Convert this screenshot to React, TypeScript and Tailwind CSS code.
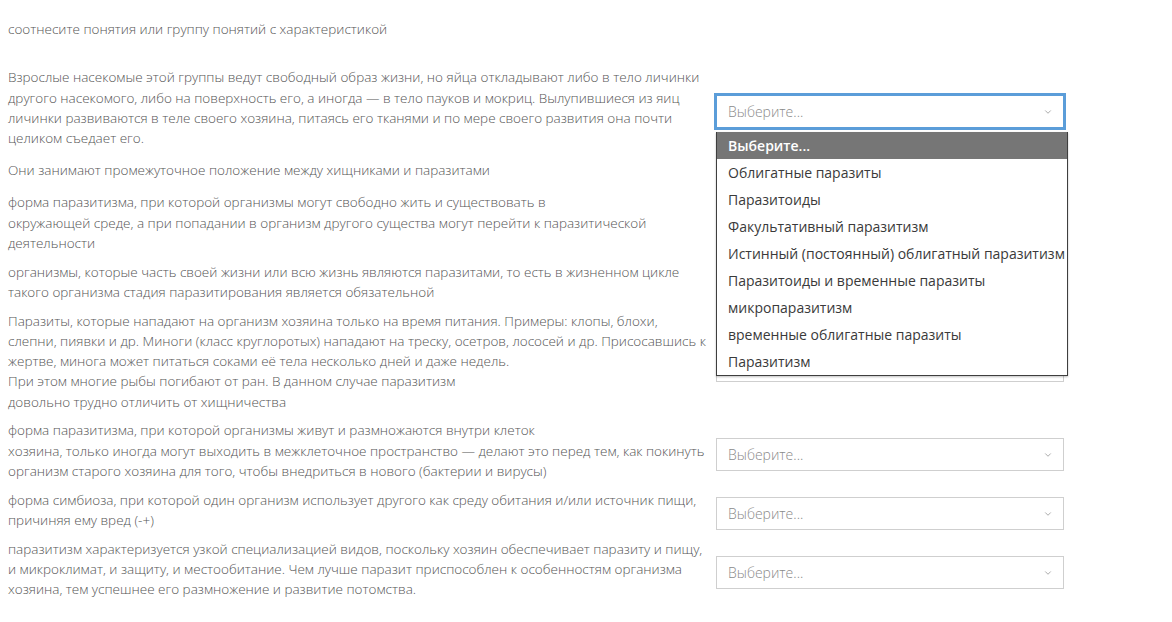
import { ChevronDown } from "lucide-react";

const rows: string[][] = [
  [
    "Взрослые насекомые этой группы ведут свободный образ жизни, но яйца откладывают либо в тело личинки",
    "другого насекомого, либо на поверхность его, а иногда — в тело пауков и мокриц. Вылупившиеся из яиц",
    "личинки развиваются в теле своего хозяина, питаясь его тканями и по мере своего развития она почти",
    "целиком съедает его.",
  ],
  ["Они занимают промежуточное положение между хищниками и паразитами"],
  [
    "форма паразитизма, при которой организмы могут свободно жить и существовать в",
    "окружающей среде, а при попадании в организм другого существа могут перейти к паразитической",
    "деятельности",
  ],
  [
    "организмы, которые часть своей жизни или всю жизнь являются паразитами, то есть в жизненном цикле",
    "такого организма стадия паразитирования является обязательной",
  ],
  [
    "Паразиты, которые нападают на организм хозяина только на время питания. Примеры: клопы, блохи,",
    "слепни, пиявки и др. Миноги (класс круглоротых) нападают на треску, осетров, лососей и др. Присосавшись к",
    "жертве, минога может питаться соками её тела несколько дней и даже недель.",
    "При этом многие рыбы погибают от ран. В данном случае паразитизм",
    "довольно трудно отличить от хищничества",
  ],
  [
    "форма паразитизма, при которой организмы живут и размножаются внутри клеток",
    "хозяина, только иногда могут выходить в межклеточное пространство — делают это перед тем, как покинуть",
    "организм старого хозяина для того, чтобы внедриться в нового (бактерии и вирусы)",
  ],
  [
    "форма симбиоза, при которой один организм использует другого как среду обитания и/или источник пищи,",
    "причиняя ему вред (-+)",
  ],
  [
    "паразитизм характеризуется узкой специализацией видов, поскольку хозяин обеспечивает паразиту и пищу,",
    "и микроклимат, и защиту, и местообитание. Чем лучше паразит приспособлен к особенностям организма",
    "хозяина, тем успешнее его размножение и развитие потомства.",
  ],
];

const options = [
  "Выберите...",
  "Облигатные паразиты",
  "Паразитоиды",
  "Факультативный паразитизм",
  "Истинный (постоянный) облигатный паразитизм",
  "Паразитоиды и временные паразиты",
  "микропаразитизм",
  "временные облигатные паразиты",
  "Паразитизм",
];

function FakeSelect({ open }: { open?: boolean }) {
  return (
    <div className="relative mt-[1px] mb-[-7px] shrink-0">
      <div
        className={
          open
            ? "w-[348px] h-[33px] flex items-center justify-between pl-[11px] pr-[10px] bg-white border border-[#5b9dd9] ring-2 ring-[#5b9dd9]"
            : "w-[348px] h-[33px] flex items-center justify-between pl-[11px] pr-[10px] bg-white border border-[#cfcfcf]"
        }
      >
        <span className="text-[14px] font-light text-[#8a8a8a]">Выберите...</span>
        <ChevronDown size={10} strokeWidth={2} className="text-[#9a9a9a]" />
      </div>

      {/* native option list, drawn open */}
      {open && (
        <div className="absolute z-10 left-0 top-[37px] w-[352px] bg-white border border-t-0 border-[#3e3e3e] shadow-[0_1px_2px_rgba(0,0,0,0.25)]">
          {options.map((o, i) => (
            <div
              key={o}
              className={
                i === 0
                  ? "h-[27px] flex items-center pl-[11px] bg-[#767676] text-white font-semibold text-[14px] whitespace-nowrap"
                  : "h-[27px] flex items-center pl-[11px] text-[#3a3a3a] text-[14px] whitespace-nowrap"
              }
            >
              {o}
            </div>
          ))}
        </div>
      )}
    </div>
  );
}

export default function App() {
  return (
    <div className="min-h-screen bg-white pl-[8px] pt-[19px] font-['Open_Sans',sans-serif] text-[13.5px] leading-[20.25px] text-[#555]">
      <p className="font-light mb-[28px]">соотнесите понятия или группу понятий с характеристикой</p>

      <div className="flex flex-col gap-[8.5px]">
        {rows.map((lines, i) => (
          <div key={i} className="flex items-center">
            <div className="w-[708px] shrink-0 font-light">
              {lines.map((l, j) => (
                <div key={j} className="whitespace-nowrap">
                  {l}
                </div>
              ))}
            </div>
            <FakeSelect open={i === 0} />
          </div>
        ))}
      </div>
    </div>
  );
}
